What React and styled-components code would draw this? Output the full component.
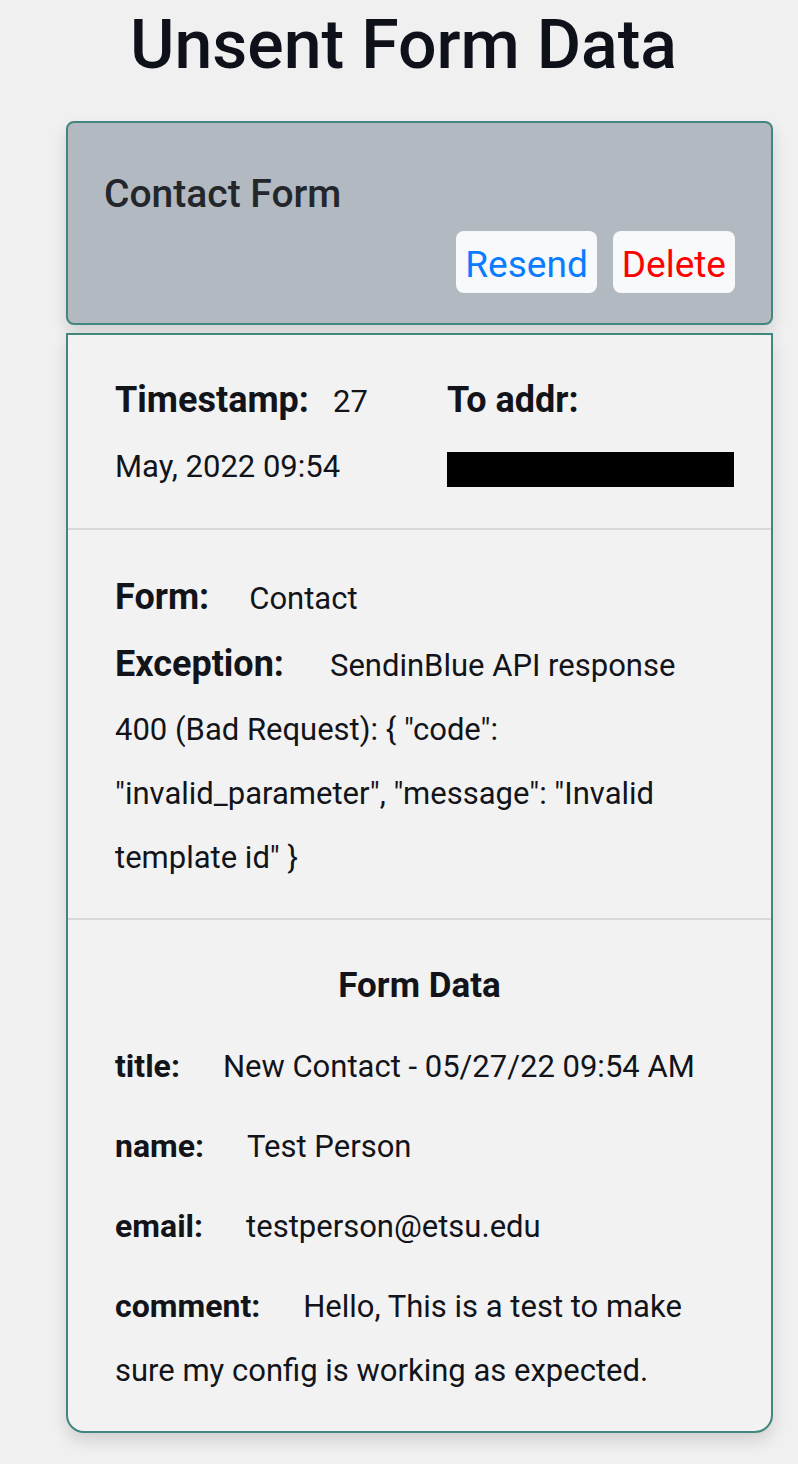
import styled, { createGlobalStyle } from "styled-components";

const GlobalStyle = createGlobalStyle`
  html, body {
    margin: 0;
    padding: 0;
    background: #f0f0f0;
  }
  body {
    font-family: Roboto, "Liberation Sans", sans-serif;
    color: #12141a;
  }
  * {
    box-sizing: border-box;
  }
`;

const Page = styled.main`
  width: 798px;
  min-height: 1464px;
  padding-top: 5px;
`;

const Title = styled.h1`
  margin: 0 0 34px;
  padding-left: 9px;
  text-align: center;
  font-size: 68px;
  font-weight: 500;
  line-height: 1.2;
  color: #0e1119;
`;

const Column = styled.div`
  margin-left: 66px;
  width: 707px;
`;

const HeaderCard = styled.section`
  display: flex;
  flex-direction: column;
  padding: 48px 36px 30px;
  background: #b2b9c0;
  border: 2px solid #42877d;
  border-radius: 8px;
  box-shadow: 0 8px 16px rgba(0, 0, 0, 0.13);
`;

const CardTitle = styled.h2`
  margin: 0 0 14px;
  font-size: 39px;
  font-weight: 500;
  line-height: 1.2;
  color: #23262b;
`;

const Actions = styled.div`
  display: flex;
  justify-content: flex-end;
  gap: 16px;
`;

const ActionButton = styled.button`
  height: 62px;
  padding: 4px 9px 0;
  border: none;
  border-radius: 8px;
  background: #f8f9fa;
  font-family: inherit;
  font-size: 37px;
  font-weight: 400;
  color: ${(p) => (p.$danger ? "#ff0000" : "#0a7cff")};
  cursor: pointer;
`;

const BodyCard = styled.section`
  margin-top: 8px;
  background: #f2f2f2;
  border: 2px solid #42877d;
  border-radius: 0 0 18px 18px;
  box-shadow: 0 8px 16px rgba(0, 0, 0, 0.13);
`;

const Section = styled.div`
  padding: ${(p) => p.$pad || "32px 47px"};

  & + & {
    border-top: 2px solid #d8d8d8;
  }
`;

const MetaGrid = styled.div`
  display: grid;
  grid-template-columns: 316px 1fr;
  column-gap: 16px;
`;

const Line = styled.p`
  margin: 0 0 ${(p) => p.$gap || 0}px;
  font-size: 31px;
  line-height: ${(p) => p.$lh || 65}px;
`;

const Label = styled.span`
  margin-right: ${(p) => p.$space || 40}px;
  font-size: ${(p) => (p.$big ? 36 : 32)}px;
  font-weight: 700;
`;

const Redacted = styled.div`
  width: 287px;
  height: 35px;
  margin-top: 18px;
  background: #000;
`;

const SubHeading = styled.h3`
  margin: 0 0 16px;
  text-align: center;
  font-size: 35px;
  font-weight: 700;
  line-height: 64px;
`;

const formData = [
  ["title", "New Contact - 05/27/22 09:54 AM"],
  ["name", "Test Person"],
  ["email", "testperson@etsu.edu"],
  ["comment", "Hello, This is a test to make sure my config is working as expected."],
];

export default function App() {
  return (
    <>
      <GlobalStyle />
      <Page>
        <Title>Unsent Form Data</Title>
        <Column>
          <HeaderCard>
            <CardTitle>Contact Form</CardTitle>
            <Actions>
              <ActionButton>Resend</ActionButton>
              <ActionButton $danger>Delete</ActionButton>
            </Actions>
          </HeaderCard>

          <BodyCard>
            <Section $pad="33px 47px 29px">
              <MetaGrid>
                <Line>
                  <Label $big $space={24}>Timestamp:</Label>
                  27 May, 2022 09:54
                </Line>
                <div>
                  <Line>
                    <Label $big>To addr:</Label>
                  </Line>
                  <Redacted />
                </div>
              </MetaGrid>
            </Section>

            <Section $pad="34px 47px 28px">
              <Line $lh={66}>
                <Label $big>Form:</Label>
                Contact
              </Line>
              <Line $lh={64}>
                <Label $big $space={46}>Exception:</Label>
                SendinBlue API response 400 (Bad Request): {"{"} "code": "invalid_parameter", "message": "Invalid template id" {"}"}
              </Line>
            </Section>

            <Section $pad="34px 47px 13px">
              <SubHeading>Form Data</SubHeading>
              {formData.map(([key, value]) => (
                <Line key={key} $lh={64} $gap={15}>
                  <Label $space={43}>{key}:</Label>
                  {value}
                </Line>
              ))}
            </Section>
          </BodyCard>
        </Column>
      </Page>
    </>
  );
}
